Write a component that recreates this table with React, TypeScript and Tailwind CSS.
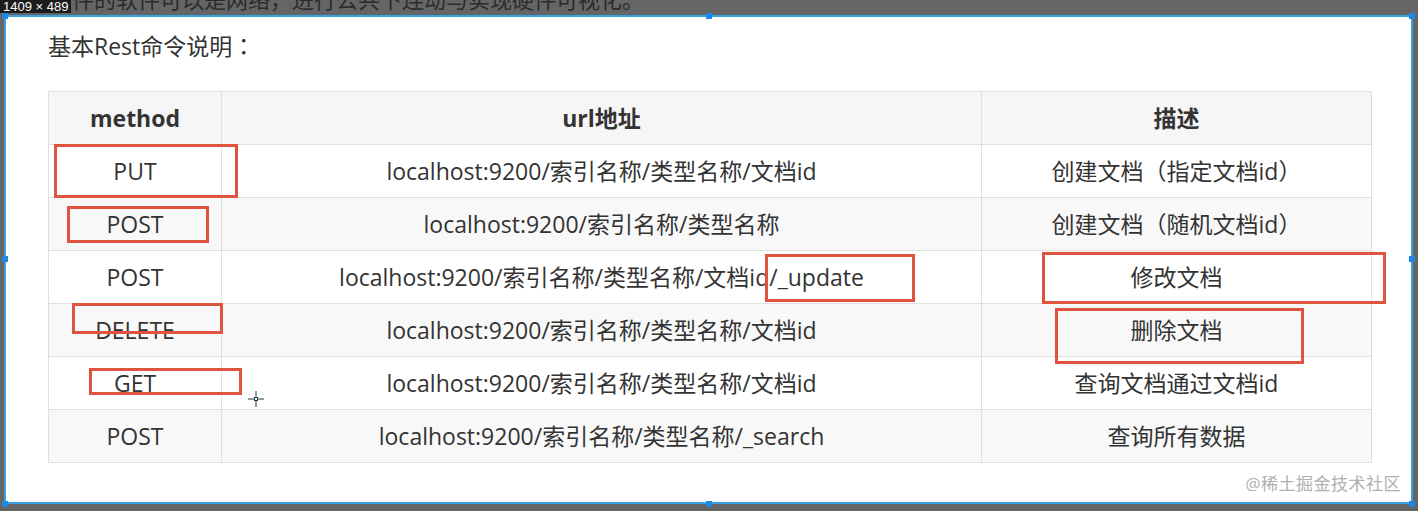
import React from "react";

const P = ({ children }: { children: React.ReactNode }) => (
  <span style={{ fontFamily: '"Noto Sans CJK TC", sans-serif' }}>{children}</span>
);

const rows: { m: string; u: string; d: React.ReactNode }[] = [
  {
    m: "PUT",
    u: "localhost:9200/索引名称/类型名称/文档id",
    d: (
      <>
        创建文档<P>（</P>指定文档id<P>）</P>
      </>
    ),
  },
  {
    m: "POST",
    u: "localhost:9200/索引名称/类型名称",
    d: (
      <>
        创建文档<P>（</P>随机文档id<P>）</P>
      </>
    ),
  },
  { m: "POST", u: "localhost:9200/索引名称/类型名称/文档id/_update", d: "修改文档" },
  { m: "DELETE", u: "localhost:9200/索引名称/类型名称/文档id", d: "删除文档" },
  { m: "GET", u: "localhost:9200/索引名称/类型名称/文档id", d: "查询文档通过文档id" },
  { m: "POST", u: "localhost:9200/索引名称/类型名称/_search", d: "查询所有数据" },
];

const redBoxes = [
  { l: 54, t: 144, w: 184, h: 54 },
  { l: 67, t: 206, w: 142, h: 37 },
  { l: 72, t: 303, w: 151, h: 31 },
  { l: 89, t: 368, w: 153, h: 27 },
  { l: 765, t: 254, w: 150, h: 48 },
  { l: 1042, t: 252, w: 344, h: 52 },
  { l: 1055, t: 308, w: 249, h: 56 },
];

const handles = [
  [4, 15],
  [708, 15],
  [1411, 15],
  [4, 258],
  [1411, 258],
  [4, 503],
  [708, 503],
  [1411, 503],
];

export default function App() {
  const font = { fontFamily: '"Open Sans", "Noto Sans CJK SC", sans-serif' };
  return (
    <div
      className="relative w-[1418px] h-[511px] bg-[#656565] overflow-hidden"
      style={font}
    >
      {/* top cut-off strip */}
      <div className="h-[15px] overflow-hidden relative">
        <div className="absolute left-[72px] top-[-14px] text-[22px] leading-[26px] text-[#2b2b2b] whitespace-nowrap">
          件的软件可以是网络，进行公共下连动与实现硬件可视化。
        </div>
      </div>
      <div className="absolute left-0 top-0 h-[13px] px-[3px] bg-[#1c1c1c] text-white text-[13px] leading-[13px] font-['Liberation_Sans',sans-serif]">
        1409 × 489
      </div>

      {/* panel */}
      <div className="ml-[4px] w-[1409px] h-[489px] bg-white border-2 border-[#3b9fe6] relative">
        <div className="pl-[42px] pt-[11px] h-[47px] leading-[34px] text-[23px] text-[#333]">
          基本Rest命令说明<P>：</P>
        </div>
        <table className="ml-[42px] mt-[27px] table-fixed border-collapse text-[23px] text-[#333]">
          <colgroup>
            <col className="w-[173px]" />
            <col className="w-[760px]" />
            <col className="w-[390px]" />
          </colgroup>
          <thead>
            <tr className="h-[53px] bg-[#f6f6f6]">
              <th className="border border-[#dfdfdf] font-bold">method</th>
              <th className="border border-[#dfdfdf] font-bold">url地址</th>
              <th className="border border-[#dfdfdf] font-bold">描述</th>
            </tr>
          </thead>
          <tbody>
            {rows.map((r, i) => (
              <tr key={i} className={`h-[53px] ${i % 2 === 1 ? "bg-[#f8f8f8]" : "bg-white"}`}>
                <td className="border border-[#dfdfdf] text-center">{r.m}</td>
                <td className="border border-[#dfdfdf] text-center">{r.u}</td>
                <td className="border border-[#dfdfdf] text-center">{r.d}</td>
              </tr>
            ))}
          </tbody>
        </table>
        <div className="absolute right-[10px] bottom-[6px] text-[17px] text-[#b0b0b0] tracking-[0.5px]">
          @稀土掘金技术社区
        </div>
      </div>

      {/* red annotation boxes */}
      {redBoxes.map((b, i) => (
        <div
          key={i}
          className="absolute border-[3px] border-[#e0533f]"
          style={{ left: b.l, top: b.t, width: b.w, height: b.h }}
        />
      ))}

      {/* selection handles */}
      {handles.map(([x, y], i) => (
        <div
          key={i}
          className="absolute w-[6px] h-[6px] bg-[#1e88e5]"
          style={{ left: x - 2, top: y - 2 }}
        />
      ))}

      {/* crosshair cursor */}
      <svg className="absolute left-[247px] top-[390px]" width="18" height="18" viewBox="0 0 18 18">
        <path d="M9 1V7M9 11V17M1 9H7M11 9H17" stroke="#1f3a44" strokeWidth="1" fill="none" />
        <rect x="7.5" y="7.5" width="3" height="3" stroke="#1f3a44" strokeWidth="1" fill="none" />
      </svg>
    </div>
  );
}
